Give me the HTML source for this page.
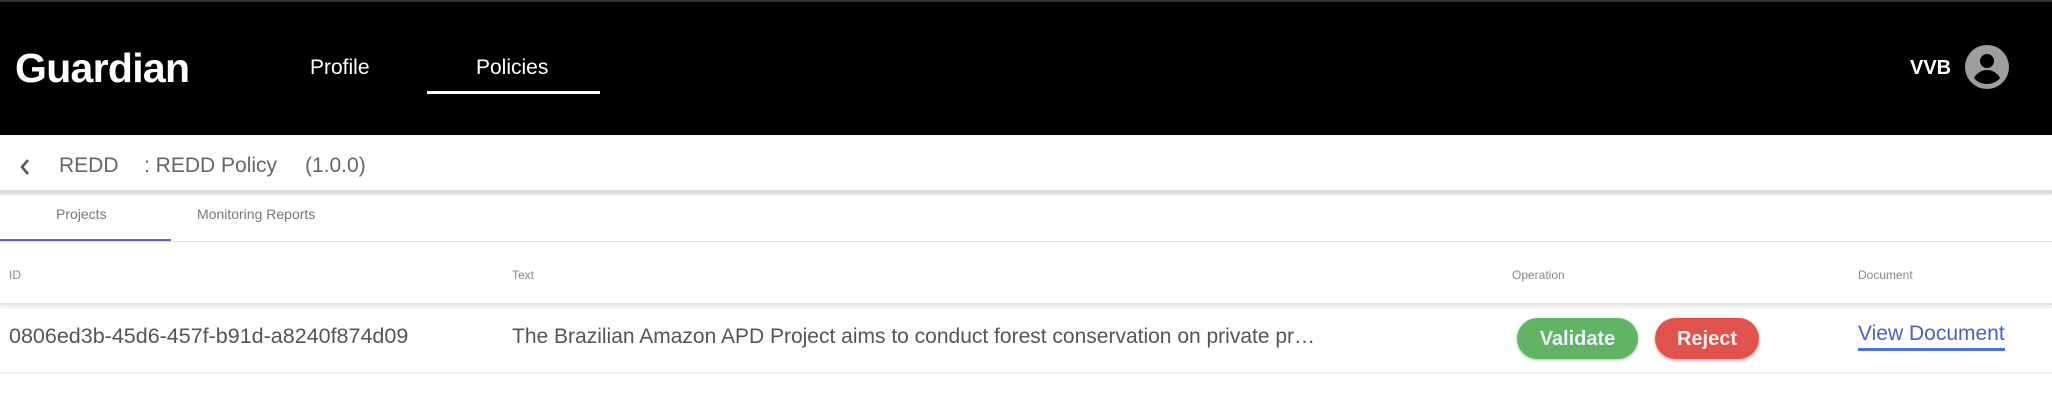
<!DOCTYPE html>
<html><head><style>
*{margin:0;padding:0;box-sizing:border-box}
body{width:2052px;height:416px;background:#fff;font-family:"Liberation Sans",sans-serif;position:relative;overflow:hidden}
.a{position:absolute;white-space:nowrap}
.hdr{position:absolute;left:0;top:0;width:2052px;height:135px;background:#000;border-top:2px solid #333}
</style></head><body>
<div class="hdr"></div>
<div class="a" style="left:15px;top:45px;font-size:41px;font-weight:bold;color:#fff;letter-spacing:-0.7px">Guardian</div>
<div class="a" style="left:310px;top:56px;font-size:21px;color:#fff">Profile</div>
<div class="a" style="left:476px;top:56px;font-size:21px;color:#fff">Policies</div>
<div class="a" style="left:427px;top:91px;width:173px;height:3px;background:#fff"></div>
<div class="a" style="left:1910px;top:57px;font-size:20px;font-weight:bold;color:#fff">VVB</div>
<svg class="a" style="left:1965px;top:45px" width="44" height="44" viewBox="0 0 44 44"><circle cx="22" cy="22" r="22" fill="#9e9e9e"/><circle cx="22" cy="16" r="7" fill="#000"/><path d="M9 33c3-6 9-8 13-8s10 2 13 8c-3 4-8 6-13 6s-10-2-13-6z" fill="#000"/></svg>
<svg class="a" style="left:18px;top:158px" width="14" height="18" viewBox="0 0 14 18"><path d="M10 2L4 9l6 7" stroke="#555" stroke-width="2.5" fill="none"/></svg>
<div class="a" style="left:59px;top:154px;font-size:21px;color:#666">REDD</div>
<div class="a" style="left:144px;top:154px;font-size:21px;color:#666">: REDD Policy</div>
<div class="a" style="left:305px;top:154px;font-size:21px;color:#666">(1.0.0)</div>
<div class="a" style="left:0;top:190px;width:2052px;height:3px;background:#ddd;box-shadow:0 1px 2px #ccc"></div>
<div class="a" style="left:56px;top:206px;font-size:14px;color:#777">Projects</div>
<div class="a" style="left:197px;top:206px;font-size:14px;color:#777">Monitoring Reports</div>
<div class="a" style="left:0;top:241px;width:2052px;height:1px;background:#ddd"></div>
<div class="a" style="left:0;top:239px;width:171px;height:2px;background:#6a5fc4"></div>
<div class="a" style="left:9px;top:268px;font-size:12px;color:#888">ID</div>
<div class="a" style="left:512px;top:268px;font-size:12px;color:#888">Text</div>
<div class="a" style="left:1512px;top:268px;font-size:12px;color:#888">Operation</div>
<div class="a" style="left:1858px;top:268px;font-size:12px;color:#888">Document</div>
<div class="a" style="left:0;top:303px;width:2052px;height:2px;background:#e4e4e4;box-shadow:0 2px 3px #ddd"></div>
<div class="a" style="left:9px;top:324px;font-size:21.5px;color:#555">0806ed3b-45d6-457f-b91d-a8240f874d09</div>
<div class="a" style="left:512px;top:325px;font-size:21px;color:#555">The Brazilian Amazon APD Project aims to conduct forest conservation on private pr…</div>
<div class="a" style="left:1517px;top:318px;width:121px;height:41px;border-radius:21px;background:#63b365;color:#eef;font-size:20px;font-weight:bold;text-align:center;line-height:42px;box-shadow:0 1px 3px #9c9">Validate</div>
<div class="a" style="left:1655px;top:318px;width:104px;height:41px;border-radius:21px;background:#e0524c;color:#fee;font-size:20px;font-weight:bold;text-align:center;line-height:42px;box-shadow:0 1px 3px #e99">Reject</div>
<div class="a" style="left:1858px;top:322px;font-size:21px;color:#4b5fc4;border-bottom:3px solid #4b72d8;padding-bottom:2px">View Document</div>
<div class="a" style="left:0;top:372px;width:2052px;height:2px;background:#eee"></div>
</body></html>
